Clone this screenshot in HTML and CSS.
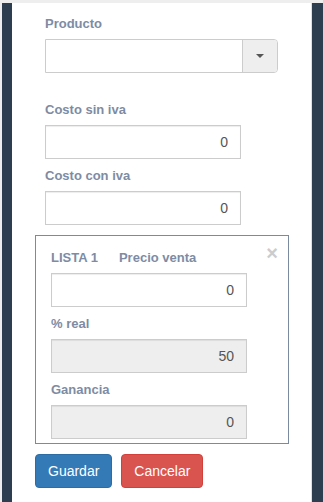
FILE: index.html
```html
<!DOCTYPE html>
<html lang="es">
<head>
  <meta charset="utf-8">
  <title>Producto</title>
  <link rel="stylesheet" href="styles.css">
</head>
<body>

<div class="shell">
  <div class="panel">

    <div class="fields">
      <div class="group group-select">
        <label>Producto</label>
        <div class="select-box">
          <div class="select-value"></div>
          <div class="select-addon"><span class="caret"></span></div>
        </div>
      </div>

      <div class="group">
        <label>Costo sin iva</label>
        <input class="control" type="text" value="0">
      </div>

      <div class="group">
        <label>Costo con iva</label>
        <input class="control" type="text" value="0">
      </div>
    </div>

    <div class="lista">
      <span class="close">&times;</span>
      <div class="group">
        <label><span class="lista-name">LISTA 1</span>Precio venta</label>
        <input class="control" type="text" value="0">
      </div>
      <div class="group">
        <label>% real</label>
        <input class="control" type="text" value="50" readonly>
      </div>
      <div class="group">
        <label>Ganancia</label>
        <input class="control" type="text" value="0" readonly>
      </div>
    </div>

    <div class="actions">
      <button class="btn btn-primary">Guardar</button>
      <button class="btn btn-danger">Cancelar</button>
    </div>

  </div>
</div>

</body>
</html>
```

FILE: styles.css
```css
html, body {
  height: 100%;
}

body {
  margin: 0;
  background: #eee;
  font-family: "Liberation Sans", Arial, Helvetica, sans-serif;
  font-size: 14px;
  line-height: 20px;
  color: #555;
}

.shell {
  box-sizing: border-box;
  min-height: calc(100% - 3px);
  margin: 3px 0 0 2px;
  padding: 0 11px 0 10px;
  background: #2c3e50;
  display: flex;
}

.panel {
  flex: 1;
  background: white;
  border-right: 1px solid #dde1e5;
  padding: 11px 0 0 23px;
}

.fields {
  padding-left: 10px;
}

label {
  display: block;
  font-size: 13px;
  font-weight: bold;
  color: #7d8ca4;
  line-height: 20px;
  margin-bottom: 5px;
}

.group {
  margin-bottom: 7px;
}

.group:last-child {
  margin-bottom: 0;
}

.group-select {
  margin-bottom: 27px;
}

.select-box {
  display: flex;
  width: 233px;
  height: 34px;
  box-sizing: border-box;
  border: 1px solid #ccc;
  border-radius: 0 4px 4px 0;
}

.select-value {
  flex: 1;
}

.select-addon {
  width: 34px;
  background: #eee;
  border-left: 1px solid #ccc;
  border-radius: 0 3px 3px 0;
  display: flex;
  align-items: center;
  justify-content: center;
}

.caret {
  width: 0;
  height: 0;
  border-left: 4px solid transparent;
  border-right: 4px solid transparent;
  border-top: 4px solid #555;
}

.control {
  display: block;
  box-sizing: border-box;
  width: 196px;
  height: 34px;
  margin: 0;
  padding: 6px 12px;
  border: 1px solid #ccc;
  border-radius: 0;
  box-shadow: inset 0 1px 1px rgba(0, 0, 0, 0.075);
  background: white;
  font: inherit;
  font-size: 14px;
  color: #555;
  text-align: right;
}

.control[readonly] {
  background: #eee;
}

.lista {
  position: relative;
  width: 254px;
  box-sizing: border-box;
  margin-top: 10px;
  padding: 12px 15px 4px 15px;
  border: 1px solid #7a8ba0;
}

.lista-name {
  margin-right: 21px;
}

.close {
  position: absolute;
  top: 7px;
  right: 10px;
  font-size: 20px;
  font-weight: bold;
  line-height: 20px;
  color: #ccc;
}

.actions {
  margin-top: 10px;
  display: flex;
  gap: 9px;
}

.btn {
  height: 34px;
  padding: 6px 12px;
  border: 1px solid transparent;
  border-radius: 4px;
  font: inherit;
  font-size: 14px;
  line-height: 20px;
  color: white;
}

.btn-primary {
  background: #337ab7;
  border-color: #2e6da4;
}

.btn-danger {
  background: #d9534f;
  border-color: #d43f3a;
}
```
